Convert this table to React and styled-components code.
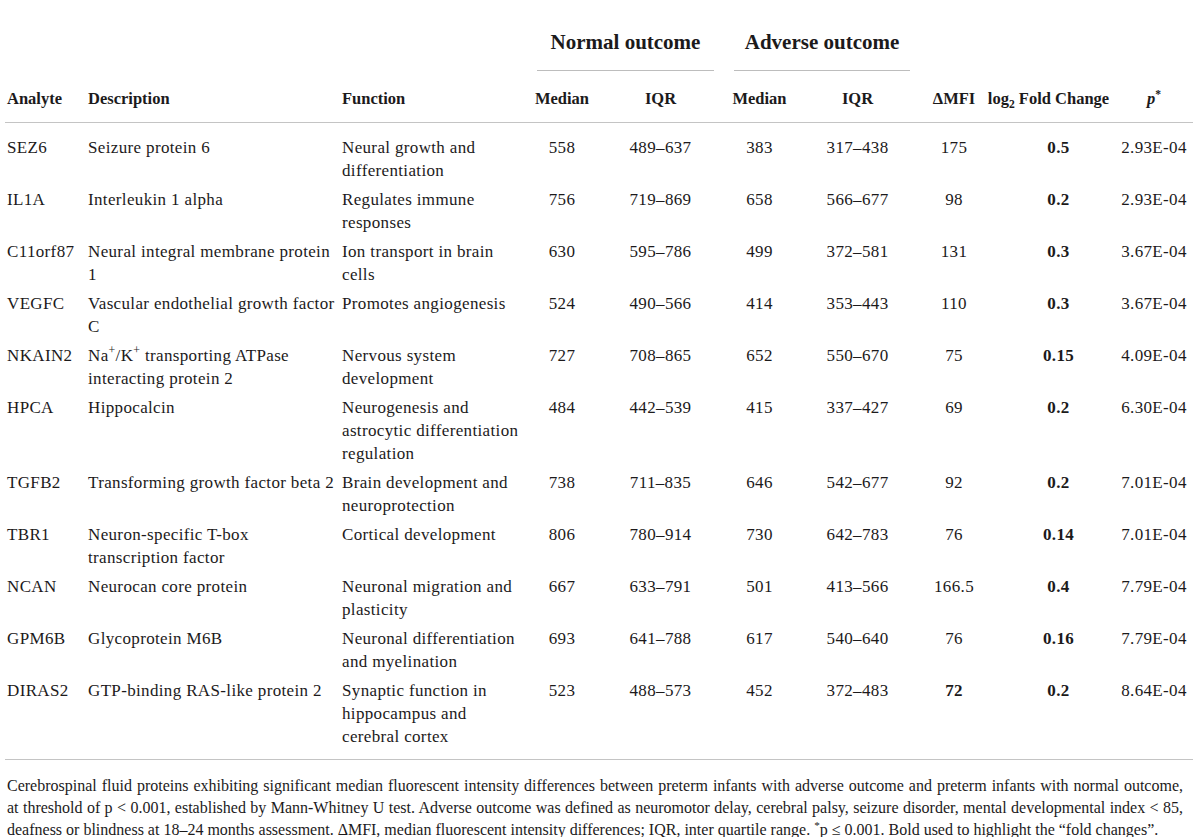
import React from "react";
import styled, { createGlobalStyle } from "styled-components";

const GlobalStyle = createGlobalStyle`
  body {
    margin: 0;
    background: #ffffff;
    color: #1c1a1b;
    font-family: "Liberation Serif", "Times New Roman", serif;
  }
`;

const Page = styled.div`
  width: 1188px;
  padding: 30px 7px 0 5px;
`;

const Table = styled.table`
  width: 1188px;
  border-collapse: collapse;
  table-layout: fixed;
`;

const Col = styled.col`
  width: ${(p) => p.$w}px;
`;

const GroupCell = styled.th`
  padding: 0;
  vertical-align: bottom;
`;

const GroupRule = styled.div`
  margin: 0 -4px 0 24px;
  padding-bottom: 16px;
  border-bottom: 1.5px solid #bdbdbd;
  font-size: 21px;
  line-height: 24px;
  font-weight: 700;
  text-align: center;
  white-space: nowrap;
`;

const HeadCell = styled.th`
  padding: 17px 0 12px ${(p) => (p.$first ? "2px" : p.$num ? "0" : "8px")};
  border-bottom: 1.5px solid #c4c4c4;
  font-size: 16.5px;
  line-height: 22px;
  font-weight: 700;
  text-align: ${(p) => (p.$num ? "center" : "left")};
  white-space: nowrap;
`;

// centred label that may spill past its narrow column
const HeadLabel = styled.span`
  display: block;
  margin: 0 -30px 0 ${(p) => (p.$wide ? "-50px" : "-30px")};
  text-align: center;
`;

const Row = styled.tr`
  td {
    padding-top: ${(p) => (p.$first ? "13px" : "3px")};
    padding-bottom: ${(p) => (p.$last ? "11px" : "3px")};
  }
`;

const Cell = styled.td`
  padding-left: ${(p) => (p.$first ? "2px" : p.$num ? "0" : "8px")};
  padding-right: 0;
  vertical-align: top;
  font-size: 17px;
  line-height: 23px;
  letter-spacing: 0.35px;
  text-align: ${(p) => (p.$num ? "center" : "left")};
  font-weight: ${(p) => (p.$bold ? 700 : 400)};
  white-space: nowrap;
`;

const Line = styled.div``;

const Sup = styled.sup`
  font-size: 0.7em;
  line-height: 0;
`;

const Sub = styled.sub`
  font-size: 0.7em;
  line-height: 0;
`;

const Caption = styled.div`
  border-top: 1.5px solid #c4c4c4;
  padding: 15px 10px 0 2px;
  font-size: 16px;
  line-height: 22px;
`;

const CaptionLine = styled.div`
  white-space: nowrap;
  text-align: ${(p) => (p.$justify ? "justify" : "left")};
  text-align-last: ${(p) => (p.$justify ? "justify" : "left")};
`;

// column widths, px: analyte, description, function, then the numeric ones
const widths = [75, 254, 179, 98, 99, 99, 97, 96, 113, 78];

const rows = [
  {
    analyte: "SEZ6",
    desc: ["Seizure protein 6"],
    func: ["Neural growth and", "differentiation"],
    v: ["558", "489–637", "383", "317–438", "175", "0.5", "2.93E-04"],
  },
  {
    analyte: "IL1A",
    desc: ["Interleukin 1 alpha"],
    func: ["Regulates immune", "responses"],
    v: ["756", "719–869", "658", "566–677", "98", "0.2", "2.93E-04"],
  },
  {
    analyte: "C11orf87",
    desc: ["Neural integral membrane protein", "1"],
    func: ["Ion transport in brain", "cells"],
    v: ["630", "595–786", "499", "372–581", "131", "0.3", "3.67E-04"],
  },
  {
    analyte: "VEGFC",
    desc: ["Vascular endothelial growth factor", "C"],
    func: ["Promotes angiogenesis"],
    v: ["524", "490–566", "414", "353–443", "110", "0.3", "3.67E-04"],
  },
  {
    analyte: "NKAIN2",
    desc: [
      <>
        Na<Sup>+</Sup>/K<Sup>+</Sup> transporting ATPase
      </>,
      "interacting protein 2",
    ],
    func: ["Nervous system", "development"],
    v: ["727", "708–865", "652", "550–670", "75", "0.15", "4.09E-04"],
  },
  {
    analyte: "HPCA",
    desc: ["Hippocalcin"],
    func: ["Neurogenesis and", "astrocytic differentiation", "regulation"],
    v: ["484", "442–539", "415", "337–427", "69", "0.2", "6.30E-04"],
  },
  {
    analyte: "TGFB2",
    desc: ["Transforming growth factor beta 2"],
    func: ["Brain development and", "neuroprotection"],
    v: ["738", "711–835", "646", "542–677", "92", "0.2", "7.01E-04"],
  },
  {
    analyte: "TBR1",
    desc: ["Neuron-specific T-box", "transcription factor"],
    func: ["Cortical development"],
    v: ["806", "780–914", "730", "642–783", "76", "0.14", "7.01E-04"],
  },
  {
    analyte: "NCAN",
    desc: ["Neurocan core protein"],
    func: ["Neuronal migration and", "plasticity"],
    v: ["667", "633–791", "501", "413–566", "166.5", "0.4", "7.79E-04"],
  },
  {
    analyte: "GPM6B",
    desc: ["Glycoprotein M6B"],
    func: ["Neuronal differentiation", "and myelination"],
    v: ["693", "641–788", "617", "540–640", "76", "0.16", "7.79E-04"],
  },
  {
    analyte: "DIRAS2",
    desc: ["GTP-binding RAS-like protein 2"],
    func: ["Synaptic function in", "hippocampus and", "cerebral cortex"],
    v: ["523", "488–573", "452", "372–483", "72", "0.2", "8.64E-04"],
    boldMfi: true,
  },
];

const Lines = ({ items }) =>
  items.map((t, i) => <Line key={i}>{t}</Line>);

const App = () => {
  return (
    <Page>
      <GlobalStyle />
      <Table>
        <colgroup>
          {widths.map((w, i) => (
            <Col key={i} $w={w} />
          ))}
        </colgroup>
        <thead>
          <tr>
            <GroupCell colSpan={3} />
            <GroupCell colSpan={2}>
              <GroupRule>Normal outcome</GroupRule>
            </GroupCell>
            <GroupCell colSpan={2}>
              <GroupRule>Adverse outcome</GroupRule>
            </GroupCell>
            <GroupCell colSpan={3} />
          </tr>
          <tr>
            <HeadCell $first>Analyte</HeadCell>
            <HeadCell>Description</HeadCell>
            <HeadCell>Function</HeadCell>
            <HeadCell $num>
              <HeadLabel>Median</HeadLabel>
            </HeadCell>
            <HeadCell $num>
              <HeadLabel>IQR</HeadLabel>
            </HeadCell>
            <HeadCell $num>
              <HeadLabel>Median</HeadLabel>
            </HeadCell>
            <HeadCell $num>
              <HeadLabel>IQR</HeadLabel>
            </HeadCell>
            <HeadCell $num>
              <HeadLabel>ΔMFI</HeadLabel>
            </HeadCell>
            <HeadCell $num>
              <HeadLabel $wide>
                log<Sub>2</Sub> Fold Change
              </HeadLabel>
            </HeadCell>
            <HeadCell $num>
              <HeadLabel>
                <i>p</i>
                <Sup>*</Sup>
              </HeadLabel>
            </HeadCell>
          </tr>
        </thead>
        <tbody>
          {rows.map((r, i) => (
            <Row key={r.analyte} $first={i === 0} $last={i === rows.length - 1}>
              <Cell $first>{r.analyte}</Cell>
              <Cell>
                <Lines items={r.desc} />
              </Cell>
              <Cell>
                <Lines items={r.func} />
              </Cell>
              <Cell $num>{r.v[0]}</Cell>
              <Cell $num>{r.v[1]}</Cell>
              <Cell $num>{r.v[2]}</Cell>
              <Cell $num>{r.v[3]}</Cell>
              <Cell $num $bold={r.boldMfi}>
                {r.v[4]}
              </Cell>
              <Cell $num $bold>
                {r.v[5]}
              </Cell>
              <Cell $num>{r.v[6]}</Cell>
            </Row>
          ))}
        </tbody>
      </Table>
      <Caption>
        <CaptionLine $justify>
          Cerebrospinal fluid proteins exhibiting significant median fluorescent
          intensity differences between preterm infants with adverse outcome and
          preterm infants with normal outcome,
        </CaptionLine>
        <CaptionLine $justify>
          at threshold of p &lt; 0.001, established by Mann-Whitney U test.
          Adverse outcome was defined as neuromotor delay, cerebral palsy,
          seizure disorder, mental developmental index &lt; 85,
        </CaptionLine>
        <CaptionLine>
          deafness or blindness at 18–24 months assessment. ΔMFI, median
          fluorescent intensity differences; IQR, inter quartile range.{" "}
          <Sup>*</Sup>p ≤ 0.001. Bold used to highlight the “fold changes”.
        </CaptionLine>
      </Caption>
    </Page>
  );
};

export default App;
